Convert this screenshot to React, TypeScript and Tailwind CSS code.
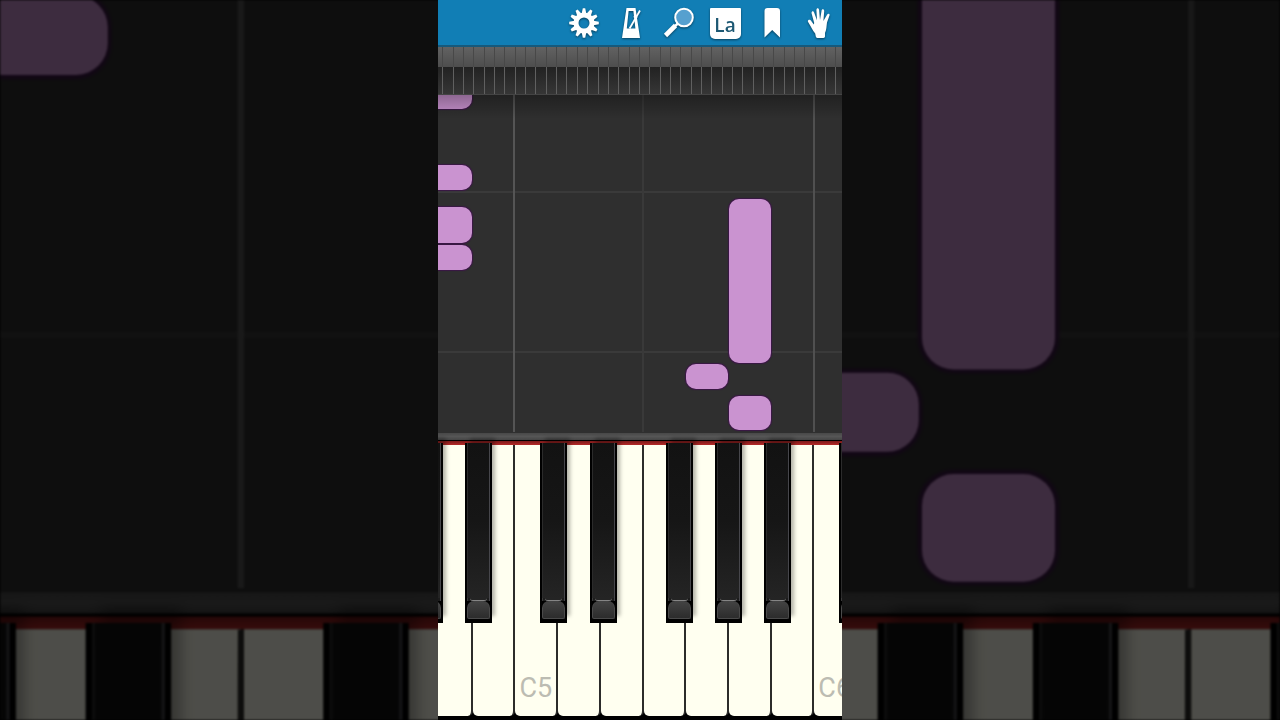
import type { ReactNode } from "react";

type Note = { x: number; y: number; w: number; h: number };

// Note blocks, measured from the top left of the roll
const NOTES: Note[] = [
  { x: -9, y: -11, w: 43, h: 25 },
  { x: -9, y: 70, w: 43, h: 25 },
  { x: -9, y: 112, w: 43, h: 36 },
  { x: -9, y: 150, w: 43, h: 25 },
  { x: 291, y: 104, w: 42, h: 164 },
  { x: 248, y: 269, w: 42, h: 25 },
  { x: 291, y: 301, w: 42, h: 34 },
];

const WHITE_KEYS = ["A4", "B4", "C5", "D5", "E5", "F5", "G5", "A5", "B5", "C6"];

const BLACK_KEYS = [
  { name: "G#4", x: -22 },
  { name: "A#4", x: 27 },
  { name: "C#5", x: 102 },
  { name: "D#5", x: 152 },
  { name: "F#5", x: 228 },
  { name: "G#5", x: 277 },
  { name: "A#5", x: 326 },
  { name: "C#6", x: 401 },
];

const GEAR_TEETH = Array.from({ length: 12 }, (_, i) => i * 30);

function GearIcon() {
  return (
    <svg width="32" height="32" viewBox="-16 -16 32 32">
      <circle r="8" fill="none" stroke="#fff" strokeWidth="5" />
      {GEAR_TEETH.map((angle) => (
        <path key={angle} d="M-2.3 -9.5 L-1.2 -14.8 H1.2 L2.3 -9.5 Z" fill="#fff" transform={`rotate(${angle})`} />
      ))}
    </svg>
  );
}

function MetronomeIcon() {
  return (
    <svg width="32" height="32" viewBox="0 0 32 32">
      <path
        fillRule="evenodd"
        fill="#fff"
        d="M11.5 1 H20.5 L25 31 H7 Z M13.6 4 L11.8 21.5 H20.4 L18.4 4 Z"
      />
      <path d="M14.6 21.5 L25 3.5" stroke="#fff" strokeWidth="1.8" />
      <path d="M19 9 L22 11" stroke="#fff" strokeWidth="2.4" />
    </svg>
  );
}

function SearchIcon() {
  return (
    <svg width="32" height="32" viewBox="0 0 32 32">
      <path d="M13.5 18.5 L3.5 28.5" stroke="#fff" strokeWidth="4.6" />
      <path d="M17 15.5 L12 20" stroke="#fff" strokeWidth="2.4" />
      <circle cx="22" cy="10.5" r="8.8" fill="#56a0cf" stroke="#fff" strokeWidth="2" />
    </svg>
  );
}

function BookmarkIcon() {
  return (
    <svg width="32" height="32" viewBox="0 0 32 32">
      <path d="M8.5 4 Q8.5 1 11.5 1 H21 Q24 1 24 4 V30.5 L16.2 23 L8.5 30.5 Z" fill="#fff" />
    </svg>
  );
}

function HandIcon() {
  return (
    <svg width="32" height="32" viewBox="0 0 32 32">
      <path
        d="M5.2 13.2 C6.4 12.2 7.8 13 8.6 14.4 L10.8 17.4 L11.2 16 L8.6 6.4 C8.2 4.2 10.3 3.4 11.1 5.6 L14 13.2 L13.4 3 C13.5 0.8 15.8 0.8 16.1 3 L17 13 L18.6 3.6 C19 1.6 21.3 2 21.2 4.2 L20.4 14 L24.2 7.6 C25.4 5.8 27.2 6.8 26.4 8.8 L24 15.6 C23.4 19.5 23.6 22.6 22 26 V29.6 Q22 31 20.4 31 H14.4 Q12.9 31 12.8 29.6 L12.2 26.6 C9.4 23.5 8 19.6 5.4 15.6 Q4.4 14 5.2 13.2 Z"
        fill="#fff"
      />
    </svg>
  );
}

function ToolButton({ label, children }: { label: string; children: ReactNode }) {
  return (
    <button
      aria-label={label}
      className="flex h-full w-[47px] items-center justify-center pt-px pl-px drop-shadow-[0_1px_1px_rgba(0,0,0,0.5)]"
    >
      {children}
    </button>
  );
}

function Toolbar() {
  return (
    <header className="flex h-[47px] shrink-0 justify-end border-b-2 border-[#17597b] bg-[#117eb5]">
      <ToolButton label="Settings"><GearIcon /></ToolButton>
      <ToolButton label="Metronome"><MetronomeIcon /></ToolButton>
      <ToolButton label="Zoom"><SearchIcon /></ToolButton>
      <ToolButton label="Note names">
        <span className="flex size-[31px] items-center justify-center rounded-t-[1px] rounded-b-[5px] bg-white pt-1 font-['Open_Sans',sans-serif] text-[19px] leading-6 font-semibold text-[#1d5873]">
          La
        </span>
      </ToolButton>
      <ToolButton label="Bookmarks"><BookmarkIcon /></ToolButton>
      <ToolButton label="Scroll"><HandIcon /></ToolButton>
    </header>
  );
}

// Narrow overview of the whole keyboard
function Overview() {
  return (
    <div className="flex h-12 shrink-0 overflow-hidden border-b border-[#444] bg-linear-to-b from-[#626262] to-[#333]">
      <div className="-ml-[5px] flex w-[414px] shrink-0">
        {Array.from({ length: 40 }, (_, i) => (
          <div key={i} className="flex flex-1 flex-col">
            <div className="h-5 border-r border-[#484848]" />
            <div className="flex-1 border-r border-[#606060] bg-linear-to-b from-[#222] to-[#363636]" />
          </div>
        ))}
      </div>
    </div>
  );
}

function Roll() {
  return (
    <div className="relative min-h-0 flex-1 overflow-hidden bg-[#2f2f2f]">
      <div className="absolute inset-x-0 top-[96px] h-[2px] bg-[#3a3a3a]" />
      <div className="absolute inset-x-0 top-[256px] h-[2px] bg-[#3a3a3a]" />
      <div className="absolute top-0 bottom-px left-[75px] w-[2px] bg-[#555]" />
      <div className="absolute top-0 bottom-px left-[204px] w-[2px] bg-[#393939]" />
      <div className="absolute top-0 bottom-px left-[375px] w-[2px] bg-[#505050]" />
      {NOTES.map((n, i) => (
        <div
          key={i}
          className="absolute rounded-[10px] bg-[#ca93d0] shadow-[0_0_1px_1px_#3b1746]"
          style={{ left: n.x, top: n.y, width: n.w, height: n.h }}
        />
      ))}
      <div className="absolute inset-x-0 top-0 h-6 bg-linear-to-b from-black/30 to-transparent" />
    </div>
  );
}

function BlackKey({ name, x }: { name: string; x: number }) {
  return (
    <button
      aria-label={name}
      className="absolute top-0 flex h-[180px] w-[27px] flex-col bg-black px-[2px] pb-[4px] shadow-[4px_-6px_4px_-1px_rgba(0,0,0,0.3)]"
      style={{ left: x }}
    >
      <span className="w-full flex-1 border-x border-l-[#2b2b2b] border-r-[#46464b] bg-linear-to-b from-[#121212] via-[#161616] to-[#242424]" />
      <span className="w-full border-x border-l-[#3a3a3a] border-r-[#46464b] bg-[#1c1c1c] px-[2px]">
        <span className="block h-[3px] rounded-b-full border-b border-[#858585] bg-[#242424]" />
      </span>
      <span className="h-[18px] w-full rounded-t-[7px] rounded-b-[2px] border-x border-b border-[#4a4a4a] bg-linear-to-b from-[#444] to-[#2c2c2c]" />
    </button>
  );
}

function Keyboard({ labels }: { labels: boolean }) {
  return (
    <div className="h-[287px] shrink-0 overflow-hidden bg-black">
      <div className="h-[7px] bg-linear-to-b from-[#484848] via-[#565656] to-[#454545]" />
      <div className="mt-px h-[4px] bg-linear-to-b from-[#7d1a1a] to-[#b52a28]" />
      <div className="relative h-[271px]">
        <div className="-ml-[8px] flex h-full w-[427px]">
          {WHITE_KEYS.map((name) => (
            <button
              key={name}
              aria-label={name}
              className="flex flex-1 items-end rounded-b-[5px] border-r-2 border-[#2c2c2a] bg-[#fffff0] pb-[12px] pl-[4px] font-[Roboto,sans-serif] text-[27px] leading-8 text-[#bcbcb2]"
            >
              {labels && name.startsWith("C") ? name : ""}
            </button>
          ))}
        </div>
        <div className="absolute inset-x-0 -top-[2px]">
          {BLACK_KEYS.map((key) => (
            <BlackKey key={key.name} name={key.name} x={key.x} />
          ))}
        </div>
      </div>
    </div>
  );
}

// Enlarged, dimmed view of the same song that fills the space beside the player
function Backdrop() {
  return (
    <div aria-hidden="true" inert className="absolute inset-0 flex justify-center overflow-hidden opacity-30 blur-[1px]">
      <div className="flex h-full w-[404px] shrink-0 scale-[3.168] flex-col overflow-hidden pt-[95px]">
        <Roll />
        <Keyboard labels={false} />
      </div>
    </div>
  );
}

function App() {
  return (
    <div className="relative flex h-screen justify-center overflow-hidden bg-black">
      <Backdrop />
      <main className="relative flex h-full w-full max-w-[404px] flex-col overflow-hidden">
        <Toolbar />
        <Overview />
        <Roll />
        <Keyboard labels />
      </main>
    </div>
  );
}

export default App;
